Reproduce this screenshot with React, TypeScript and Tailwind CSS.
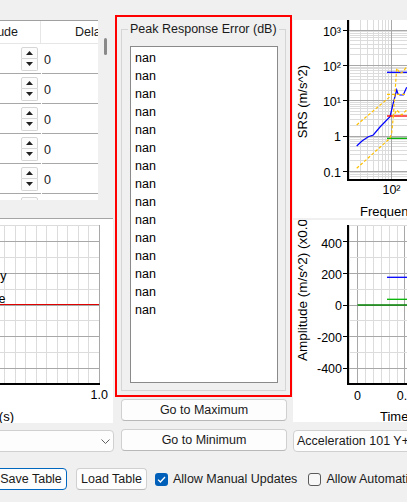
import React from "react";

const LOGS = [2, 3, 4, 5, 6, 7, 8, 9].map((k) => Math.log10(k));
const MAJOR = "#a8a8a8";
const MINOR = "#dcdcdc";

function SpinArrows() {
  return (
    <div className="flex flex-col w-[17px] h-[24px]">
      <div className="flex-1 flex items-center justify-center border border-[#d6d6d6] rounded-t-[2px] bg-[#fcfcfc]">
        <svg width="7" height="4" viewBox="0 0 7 4">
          <path d="M0 4L3.5 0L7 4Z" fill="#202020" />
        </svg>
      </div>
      <div className="flex-1 flex items-center justify-center border border-t-0 border-[#d6d6d6] rounded-b-[2px] bg-[#fcfcfc]">
        <svg width="7" height="4" viewBox="0 0 7 4">
          <path d="M0 0L3.5 4L7 0Z" fill="#202020" />
        </svg>
      </div>
    </div>
  );
}

function ParamTable() {
  return (
    <div className="flex h-[180px]">
      <div className="w-[98px] overflow-hidden bg-white border-t border-[#a0a0a0]">
        <div className="flex h-[23px] border-b border-[#e6e6e6]">
          <div className="w-[41px] shrink-0 flex justify-end items-center pr-[22px] border-r border-[#e6e6e6]">
            <span className="shrink-0 whitespace-nowrap">Amplitude</span>
          </div>
          <div className="flex items-center pl-[34px] whitespace-nowrap">Delay</div>
        </div>
        {[0, 1, 2, 3, 4, 5].map((i) => (
          <div key={i} className="flex h-[30px]">
            <div className="w-[41px] shrink-0 flex items-center justify-end pr-[3px] border-b border-[#a8a8a8]">
              <SpinArrows />
            </div>
            <div className="ml-[1px] flex-1 flex items-center pl-[2px] pt-[4px] border-b border-[#a8a8a8]">0</div>
          </div>
        ))}
      </div>
      <div className="w-[15px] flex justify-center pt-[18px]">
        <div className="w-[3px] h-[17px] rounded-full bg-[#8a8a8a]" />
      </div>
    </div>
  );
}

function LeftPlot() {
  const minors = [6.9, 38.5, 70.2, 101.8, 133.5];
  const majors = [22.7, 54.3, 86, 117.7, 149.3];
  const vert = Array.from({ length: 10 }, (_, k) => 99.3 - 10.5 * k);
  return (
    <svg width="113" height="204" className="block">
      {vert.map((x, i) => (
        <line key={"v" + i} x1={x} x2={x} y1={6} y2={165} stroke={i === 0 ? MAJOR : MINOR} shapeRendering="crispEdges" />
      ))}
      {minors.map((y) => (
        <line key={"n" + y} x1={0} x2={99.3} y1={y} y2={y} stroke={MINOR} shapeRendering="crispEdges" />
      ))}
      {majors.map((y) => (
        <line key={"m" + y} x1={0} x2={99.3} y1={y} y2={y} stroke={MAJOR} shapeRendering="crispEdges" />
      ))}
      <line x1={0} x2={99.3} y1={85.5} y2={85.5} stroke="#e00000" shapeRendering="crispEdges" />
      <line x1={0} x2={100} y1={165} y2={165} stroke="#000" strokeWidth={2} shapeRendering="crispEdges" />
      <text x={6.5} y={60.5} textAnchor="end" fontSize={12.5}>Boundary</text>
      <text x={5.5} y={84} textAnchor="end" fontSize={12.5}>Response</text>
      <text x={99.3} y={179.5} textAnchor="middle" fontSize={12.5}>1.0</text>
      <text x={14} y={201.5} textAnchor="end" fontSize={13}>Time (s)</text>
    </svg>
  );
}

function SrsPlot() {
  const decadeBase = [186.6, 151.3, 116, 80.7, 45.4, 10.1];
  const minorY: number[] = [];
  decadeBase.forEach((b) => LOGS.forEach((l) => {
    const y = b - 35.3 * l;
    if (y > 0 && y < 159) minorY.push(y);
  }));
  const minorX: number[] = [];
  [38.5, 98.5].forEach((b) => LOGS.forEach((l) => {
    const x = b + 60 * l;
    if (x > 55 && x < 114) minorX.push(x);
  }));
  const majorY = [10, 45.3, 80.6, 116, 151.3];
  const labels = ["10³", "10²", "10¹", "1", "0.1"];
  const labelY = [16, 50.5, 86, 121, 157];
  const blue = "63.7,126 69,121 75.3,116.7 80.3,115 87,107 97,96.7 100.3,83 103.7,70 105,74 107,75 110.3,75 113.7,67.3";
  return (
    <svg width="114" height="198" className="block">
      {minorX.map((x) => (
        <line key={"vx" + x} x1={x} x2={x} y1={0} y2={159.5} stroke={MINOR} shapeRendering="crispEdges" />
      ))}
      {minorY.map((y) => (
        <line key={"hy" + y} x1={55} x2={114} y1={y} y2={y} stroke={MINOR} shapeRendering="crispEdges" />
      ))}
      <line x1={98.5} x2={98.5} y1={0} y2={159.5} stroke={MAJOR} shapeRendering="crispEdges" />
      {majorY.map((y, i) => (
        <g key={"my" + y}>
          <line x1={50} x2={114} y1={y} y2={y} stroke={MAJOR} shapeRendering="crispEdges" />
          <line x1={50} x2={55} y1={y} y2={y} stroke="#000" shapeRendering="crispEdges" />
          <text x={48} y={labelY[i]} textAnchor="end" fontSize={12.5}>{labels[i]}</text>
        </g>
      ))}
      <polyline points={blue} fill="none" stroke="#0000ff" strokeWidth={1.2} />
      <line x1={94} x2={114} y1={52.3} y2={52.3} stroke="#0000ff" strokeWidth={1.3} />
      <line x1={94} x2={114} y1={96} y2={96} stroke="#ff0000" strokeWidth={1.3} />
      <line x1={94} x2={114} y1={118.3} y2={118.3} stroke="#00b000" strokeWidth={1.3} />
      <polyline points="63.7,105 97,76.7" fill="none" stroke="#ffc000" strokeWidth={1.2} strokeDasharray="3 2" />
      <line x1={94} x2={114} y1={74.3} y2={74.3} stroke="#ffc000" strokeWidth={1.2} strokeDasharray="3 2" />
      <polyline points="100.3,96.7 103.7,48.3 107,53.3 110.3,51.7 114,46" fill="none" stroke="#ffc000" strokeWidth={1.2} strokeDasharray="3 2" />
      <polyline points="63.7,148.3 97,118.3 98.7,113 100.3,96.7 103.7,90 108.7,95 113.7,90" fill="none" stroke="#ffc000" strokeWidth={1.2} strokeDasharray="3 2" />
      <line x1={54.5} x2={54.5} y1={0} y2={160.5} stroke="#000" strokeWidth={2} shapeRendering="crispEdges" />
      <line x1={53.5} x2={114} y1={159.5} y2={159.5} stroke="#000" strokeWidth={2} shapeRendering="crispEdges" />
      <text x={98.5} y={173.5} textAnchor="middle" fontSize={12.5}>10²</text>
      <text x={67} y={195.5} fontSize={13}>Frequency (Hz)</text>
      <text transform="translate(14 81.5) rotate(-90)" textAnchor="middle" fontSize={13}>SRS (m/s^2)</text>
    </svg>
  );
}

function TimePlot() {
  const minors = [5.9, 37.5, 69.2, 100.8, 132.5];
  const majors = [21.7, 53.3, 85, 116.7, 148.3];
  const vert = Array.from({ length: 9 }, (_, k) => 56.6 + 7.9 * k);
  const labels = ["400", "200", "0", "-200", "-400"];
  const labelY = [27.5, 58.5, 89.5, 121.5, 152.5];
  return (
    <svg width="114" height="202" className="block">
      {vert.map((x, i) => (
        <line key={"v" + i} x1={x} x2={x} y1={5} y2={164} stroke={i === 1 || i === 7 ? MAJOR : MINOR} shapeRendering="crispEdges" />
      ))}
      {minors.map((y) => (
        <line key={"n" + y} x1={55} x2={114} y1={y} y2={y} stroke={MINOR} shapeRendering="crispEdges" />
      ))}
      {majors.map((y, i) => (
        <g key={"m" + y}>
          <line x1={50} x2={114} y1={y} y2={y} stroke={MAJOR} shapeRendering="crispEdges" />
          <line x1={50} x2={55} y1={y} y2={y} stroke="#000" shapeRendering="crispEdges" />
          <text x={49} y={labelY[i]} textAnchor="end" fontSize={12.5}>{labels[i]}</text>
        </g>
      ))}
      <line x1={64.5} x2={114} y1={85} y2={85} stroke="#008000" strokeWidth={1.3} />
      <line x1={94} x2={114} y1={57.3} y2={57.3} stroke="#0000ff" strokeWidth={1.3} />
      <line x1={94} x2={114} y1={79.3} y2={79.3} stroke="#00b400" strokeWidth={1.3} />
      <line x1={54.5} x2={54.5} y1={5} y2={165} stroke="#000" strokeWidth={2} shapeRendering="crispEdges" />
      <line x1={53.5} x2={114} y1={164} y2={164} stroke="#000" strokeWidth={2} shapeRendering="crispEdges" />
      <text x={64.5} y={179.5} textAnchor="middle" fontSize={12.5}>0</text>
      <text x={112.5} y={179.5} textAnchor="middle" fontSize={12.5}>0.2</text>
      <text x={87} y={200.5} fontSize={13}>Time (s)</text>
      <text transform="translate(14.4 141) rotate(-90)" fontSize={13.5}>Amplitude (m/s^2) (x0.001)</text>
    </svg>
  );
}

function Chevron() {
  return (
    <svg width="9" height="5" viewBox="0 0 9 5">
      <path d="M0.5 0.5L4.5 4.5L8.5 0.5" fill="none" stroke="#606060" />
    </svg>
  );
}

const btn = "h-[22px] shrink-0 flex items-center justify-center bg-[#fdfdfd] border border-[#d0d0d0] border-b-[#b8b8b8] rounded-[4px] whitespace-nowrap";

export default function App() {
  return (
    <div className="w-[407px] h-[502px] overflow-hidden bg-[#f0f0f0] text-[12.5px] text-[#1a1a1a] font-['Liberation_Sans',Arial,sans-serif] flex flex-col">
      <div className="flex h-[452px] shrink-0">
        {/* left column */}
        <div className="w-[115px] shrink-0 flex flex-col pt-[20px]">
          <ParamTable />
          <div className="mt-[18px] w-[113px] h-[205px] bg-white border-t border-[#a5a5a5]">
            <LeftPlot />
          </div>
          <div className="mt-[7px] -ml-[20px] w-[134px] h-[22px] flex items-center justify-end pr-[3px] bg-[#fdfdfd] border border-[#d0d0d0] rounded-[4px]">
            <Chevron />
          </div>
        </div>

        {/* center column */}
        <div className="w-[177px] shrink-0 flex flex-col pt-[15px]">
          <div className="h-[382px] border-2 border-[#ff0000]">
            <fieldset className="mt-[5px] mx-[4px] border border-[#d5d5d5] pb-[7px]">
              <legend className="ml-[6px] px-[2px] leading-[15px] whitespace-nowrap">Peak Response Error (dB)</legend>
              <div className="mt-[9px] ml-[8px] w-[148px] h-[337px] bg-white border border-[#8a8a8a] pt-[2px] pl-[4px] text-black">
                {Array.from({ length: 15 }).map((_, i) => (
                  <div key={i} className="h-[18px] leading-[18px]">nan</div>
                ))}
              </div>
            </fieldset>
          </div>
          <div className={btn + " mt-[2px] ml-[6px] w-[166px]"}>Go to Maximum</div>
          <div className={btn + " mt-[8px] ml-[6px] w-[166px]"}>Go to Minimum</div>
        </div>

        {/* right column */}
        <div className="ml-[1px] w-[130px] shrink-0 flex flex-col pt-[20px]">
          <div className="h-[198px] bg-white">
            <SrsPlot />
          </div>
          <div className="mt-[2px] h-[202px] bg-white">
            <TimePlot />
          </div>
          <div className="mt-[8px] h-[22px] flex items-center pl-[3px] bg-[#fdfdfd] border border-[#d0d0d0] rounded-[4px] whitespace-nowrap overflow-hidden">
            Acceleration 101 Y+ (Response)
          </div>
        </div>
      </div>

      {/* bottom controls */}
      <div className="mt-[16px] h-[22px] flex items-center whitespace-nowrap shrink-0">
        <div className="-ml-[5px] w-[72px] h-[22px] shrink-0 flex items-center justify-center bg-[#fdfdfd] border border-[#0067c0] rounded-[4px]">
          Save Table
        </div>
        <div className={btn + " ml-[9px] w-[71px]"}>Load Table</div>
        <div className="ml-[8px] w-[13px] h-[13px] rounded-[3px] bg-[#005fb8] flex items-center justify-center shrink-0">
          <svg width="9" height="7" viewBox="0 0 9 7">
            <path d="M1 3.6L3.4 6L8 1" fill="none" stroke="#fff" strokeWidth="1.3" />
          </svg>
        </div>
        <span className="ml-[5px] shrink-0">Allow Manual Updates</span>
        <div className="ml-[11px] w-[13px] h-[13px] rounded-[3px] bg-[#f7f7f7] border border-[#5a5a5a] shrink-0" />
        <span className="ml-[5px] shrink-0">Allow Automatic Updates</span>
      </div>
    </div>
  );
}
